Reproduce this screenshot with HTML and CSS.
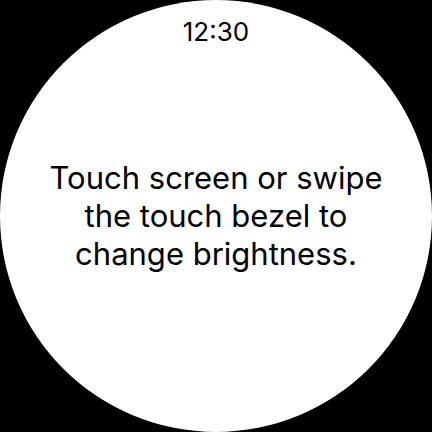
FILE: index.html
```html
<!DOCTYPE html>
<html>
<head>
<meta charset="utf-8">
<link rel="stylesheet" href="styles.css">
</head>
<body>
<div class="watch">
  <div class="time">12:30</div>
  <div class="message">Touch screen or swipe<br>the touch bezel to<br>change brightness.</div>
</div>
</body>
</html>
```
FILE: styles.css
```css
html, body {
  margin: 0;
  padding: 0;
  background: #000;
}
.watch {
  width: 432px;
  height: 432px;
  border-radius: 50%;
  background: #fff;
  display: flex;
  flex-direction: column;
  align-items: center;
  font-family: Inter, "Noto Sans", sans-serif;
  color: #000;
  box-sizing: border-box;
  padding-top: 16px;
}
.time {
  font-size: 26px;
  line-height: 32px;
}
.message {
  margin-top: 111px;
  font-size: 31px;
  line-height: 38px;
  text-align: center;
}
```
